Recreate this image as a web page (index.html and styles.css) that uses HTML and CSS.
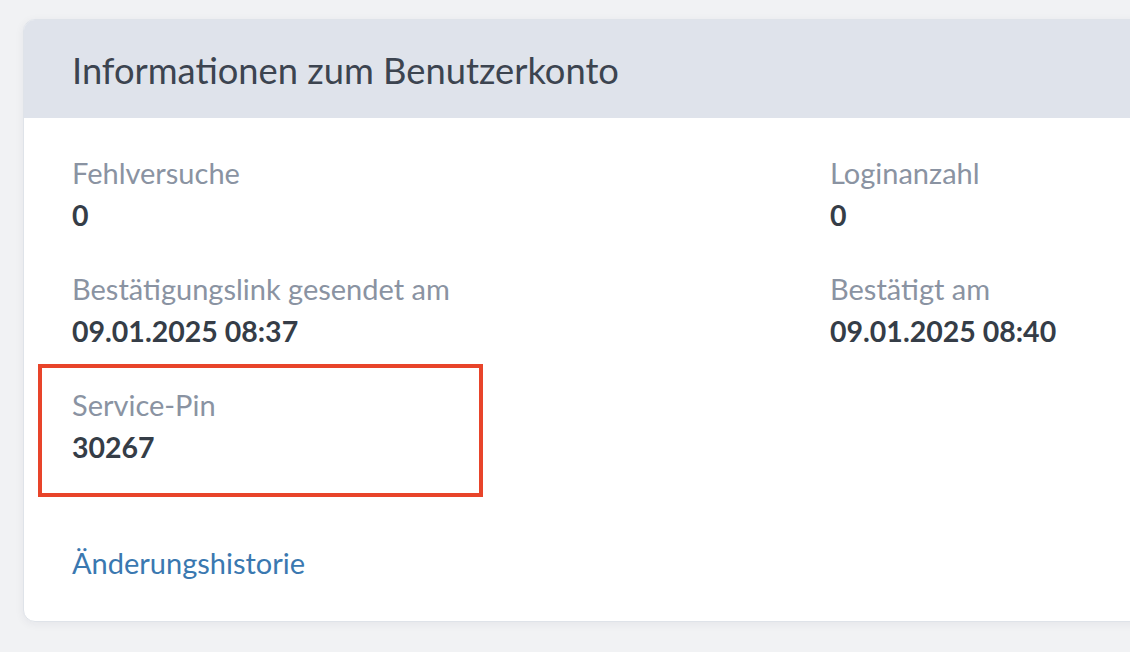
FILE: index.html
```html
<!DOCTYPE html>
<html lang="de">
<head>
<meta charset="utf-8">
<title>Informationen zum Benutzerkonto</title>
<link rel="stylesheet" href="styles.css">
</head>
<body>
<section class="card">
  <header class="card-header">
    <h2 class="card-title">Informationen zum Benutzerkonto</h2>
  </header>
  <div class="card-body">
    <dl class="info-grid">
      <div class="item">
        <dt class="label">Fehlversuche</dt>
        <dd class="value">0</dd>
      </div>
      <div class="item">
        <dt class="label">Loginanzahl</dt>
        <dd class="value">0</dd>
      </div>
      <div class="item">
        <dt class="label">Bestätigungslink gesendet am</dt>
        <dd class="value">09.01.2025 08:37</dd>
      </div>
      <div class="item">
        <dt class="label">Bestätigt am</dt>
        <dd class="value">09.01.2025 08:40</dd>
      </div>
      <div class="item item-highlight">
        <dt class="label">Service-Pin</dt>
        <dd class="value">30267</dd>
      </div>
    </dl>
    <a class="history-link" href="#">Änderungshistorie</a>
  </div>
</section>
</body>
</html>
```

FILE: styles.css
```css
html, body {
  margin: 0;
  padding: 0;
}

body {
  background: #f1f2f4;
  font-family: Lato, "Noto Sans", sans-serif;
  overflow: hidden;
  width: 1130px;
  height: 652px;
}

.card {
  margin: 19px 0 0 23px;
  width: 1200px;
  background: #ffffff;
  border: 1px solid #dfe3e9;
  border-radius: 12px;
  box-shadow: 0 2px 10px rgba(30, 40, 60, 0.06);
  overflow: hidden;
  box-sizing: border-box;
}

.card-header {
  background: #dfe3eb;
  height: 98px;
  display: flex;
  align-items: center;
  padding-left: 48px;
  box-sizing: border-box;
}

.card-title {
  margin: 0;
  font-size: 36.3px;
  font-weight: 400;
  color: #3c4450;
  line-height: 44px;
  padding-top: 2px;
}

.card-body {
  padding: 34px 48px 37px;
}

.info-grid {
  margin: 0;
  display: grid;
  grid-template-columns: 758px 1fr;
  row-gap: 32px;
}

.item {
  position: relative;
}

.label {
  margin: 0;
  font-size: 29px;
  line-height: 42px;
  color: #8a93a2;
}

.value {
  margin: 0;
  font-size: 28.5px;
  line-height: 42px;
  font-weight: 700;
  color: #353d47;
}

.item-highlight::after {
  content: "";
  position: absolute;
  left: -34px;
  top: -20px;
  width: 445px;
  height: 133px;
  border: 4px solid #e8442a;
  box-sizing: border-box;
}

.history-link {
  display: block;
  margin-top: 74px;
  font-size: 29px;
  line-height: 42px;
  color: #3a78b0;
  text-decoration: none;
}
```
